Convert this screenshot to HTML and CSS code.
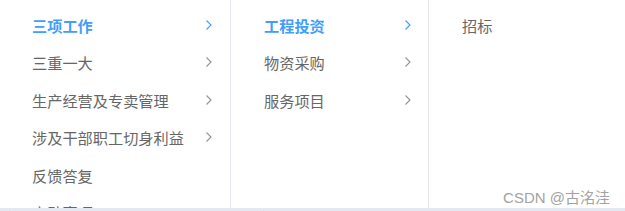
FILE: index.html
```html
<!DOCTYPE html>
<html lang="zh-CN">

<head>
    <meta charset="UTF-8">
    <title>级联选择</title>
    <link rel="stylesheet" href="styles.css">
</head>

<body>
    <div class="cascader">
        <!-- 第一级 -->
        <ul class="menu menu-first">
            <li class="node active">三项工作<svg class="arrow" viewBox="0 0 6 10"><path d="M0.5 0.5 L5 5 L0.5 9.5"/></svg></li>
            <li class="node">三重一大<svg class="arrow" viewBox="0 0 6 10"><path d="M0.5 0.5 L5 5 L0.5 9.5"/></svg></li>
            <li class="node">生产经营及专卖管理<svg class="arrow" viewBox="0 0 6 10"><path d="M0.5 0.5 L5 5 L0.5 9.5"/></svg></li>
            <li class="node">涉及干部职工切身利益<svg class="arrow" viewBox="0 0 6 10"><path d="M0.5 0.5 L5 5 L0.5 9.5"/></svg></li>
            <li class="node">反馈答复</li>
            <li class="node">宣动事项</li>
        </ul>
        <!-- 第二级 -->
        <ul class="menu menu-second">
            <li class="node active">工程投资<svg class="arrow" viewBox="0 0 6 10"><path d="M0.5 0.5 L5 5 L0.5 9.5"/></svg></li>
            <li class="node">物资采购<svg class="arrow" viewBox="0 0 6 10"><path d="M0.5 0.5 L5 5 L0.5 9.5"/></svg></li>
            <li class="node">服务项目<svg class="arrow" viewBox="0 0 6 10"><path d="M0.5 0.5 L5 5 L0.5 9.5"/></svg></li>
        </ul>
        <!-- 第三级 -->
        <ul class="menu menu-third">
            <li class="node">招标</li>
        </ul>
        <div class="watermark">CSDN @古洺洼</div>
    </div>

    <div class="table-row">
        <span class="cell c1">编辑</span>
        <span class="cell c2">查看附件</span>
        <span class="cell c3">删除</span>
        <span class="cell c4">详情</span>
        <span class="cell c5">修改</span>
        <span class="cell c6">下载</span>
    </div>
</body>

</html>
```

FILE: styles.css
```css
body {
    margin: 0;
    background-color: #fff;
    font-family: "Liberation Sans", "Noto Sans CJK SC", sans-serif;
}

.cascader {
    position: relative;
    display: flex;
    height: 208px;
    overflow: hidden;
    background: white;
}

.menu {
    list-style: none;
    margin: 0;
    padding: 6px 0 0;
    box-sizing: border-box;
    border-right: 1px solid #e4e7ed;
}

.menu-first {
    width: 231px;
}

.menu-second {
    width: 198px;
}

.menu-third {
    flex: 1;
    border-right: none;
}

.node {
    display: flex;
    align-items: center;
    justify-content: space-between;
    height: 37.5px;
    padding: 0 18px 0 32px;
    font-size: 15.2px;
    color: #666;
    white-space: nowrap;
}

.menu-second .node,
.menu-third .node {
    padding-left: 33px;
    padding-right: 17px;
}

.node.active {
    color: #409eff;
    font-weight: 700;
}

.arrow {
    width: 6px;
    height: 10px;
    fill: none;
    stroke: #909399;
    stroke-width: 1.1;
}

.node.active .arrow {
    stroke: #409eff;
}

.watermark {
    position: absolute;
    right: 15px;
    top: 186px;
    font-size: 15px;
    color: #a3a3a3;
}

.table-row {
    display: flex;
    height: 3px;
    overflow: hidden;
    background-color: #e4e8f0;
    font-size: 14px;
    line-height: 18px;
    font-weight: 700;
    color: #2222ee;
}

.cell {
    display: block;
    margin-top: 1px;
}

.c1 { margin-left: 0; width: 100px; }
.c2 { width: 140px; }
.c3 { width: 130px; }
.c4 { width: 85px; }
.c5 { width: 60px; }
.c6 { width: 60px; }
```
